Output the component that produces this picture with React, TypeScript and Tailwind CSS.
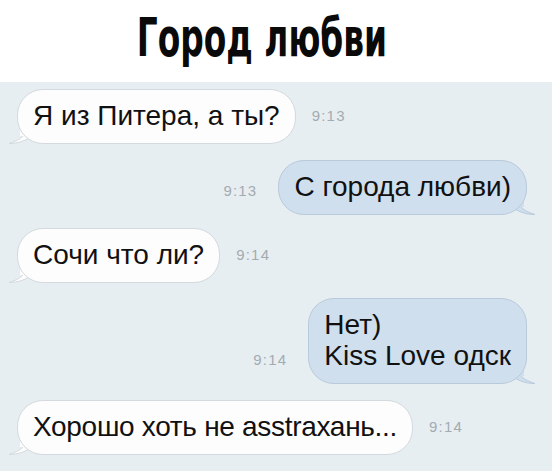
const sans = "font-['Liberation_Sans',Arial,sans-serif]";

function TailLeft() {
  return (
    <svg className="absolute -left-[9px] bottom-0" width="22" height="22" viewBox="0 0 22 22">
      <path d="M20 0 C20 10 16 17 1 21.5 C10 21.5 16 19 21 16 Z" fill="#fdfdfd" stroke="#d3d9dd" strokeWidth="1" />
      <rect x="12" y="0" width="10" height="14" fill="#fdfdfd" />
    </svg>
  );
}

function TailRight() {
  return (
    <svg className="absolute -right-[9px] bottom-0" width="22" height="22" viewBox="0 0 22 22">
      <path d="M2 0 C2 10 6 17 21 21.5 C12 21.5 6 19 1 16 Z" fill="#cfdfee" stroke="#b9cadb" strokeWidth="1" />
      <rect x="0" y="0" width="10" height="14" fill="#cfdfee" />
    </svg>
  );
}

function Time({ t }: { t: string }) {
  return <span className={`${sans} text-[15px] tracking-[1.2px] text-[#a3abb1]`}>{t}</span>;
}

function Incoming({ text, time, tight }: { text: string; time: string; tight?: boolean }) {
  return (
    <div className="flex items-center pl-[17px] gap-[16px]">
      <div className="relative">
        <TailLeft />
        <div
          className={`relative ${sans} text-[28px] leading-[31px] text-[#111] bg-[#fdfdfd] border border-[#d3d9dd] rounded-[26px] px-[15px] pt-[10px] pb-[12px] ${tight ? "tracking-[-0.3px]" : ""}`}
        >
          {text}
        </div>
      </div>
      <Time t={time} />
    </div>
  );
}

function Outgoing({ lines, time }: { lines: string[]; time: string }) {
  return (
    <div className="flex items-end justify-end pr-[25px] gap-[21px]">
      <div className="pb-[13px]">
        <Time t={time} />
      </div>
      <div className="relative">
        <TailRight />
        <div className={`relative ${sans} text-[28px] leading-[31px] text-[#111] bg-[#cfdfee] border border-[#b9cadb] rounded-[26px] px-[15px] pt-[10px] pb-[12px]`}>
          {lines.map((l, i) => (
            <div key={i}>{l}</div>
          ))}
        </div>
      </div>
    </div>
  );
}

export default function App() {
  return (
    <div className="w-[552px] h-[471px] overflow-hidden bg-[#e7eef2]">
      <div className="h-[82px] bg-white flex items-center justify-center">
        {/* no condensed face installed, so squeeze the bold one */}
        <h1 className="inline-block scale-x-[0.62] font-['DejaVu_Sans',sans-serif] font-bold text-[53px] leading-none text-[#0a0a0a] -mt-[8px] mr-[28px] whitespace-nowrap">
          Город любви
        </h1>
      </div>
      <div className="flex flex-col pt-[7px]">
        <Incoming text="Я из Питера, а ты?" time="9:13" />
        <div className="mt-[16px]">
          <Outgoing lines={["С города любви)"]} time="9:13" />
        </div>
        <div className="mt-[13px]">
          <Incoming text="Сочи что ли?" time="9:14" />
        </div>
        <div className="mt-[15px]">
          <Outgoing lines={["Нет)", "Kiss Love одск"]} time="9:14" />
        </div>
        <div className="mt-[16px]">
          <Incoming text="Хорошо хоть не asstraхань..." time="9:14" tight />
        </div>
      </div>
    </div>
  );
}
